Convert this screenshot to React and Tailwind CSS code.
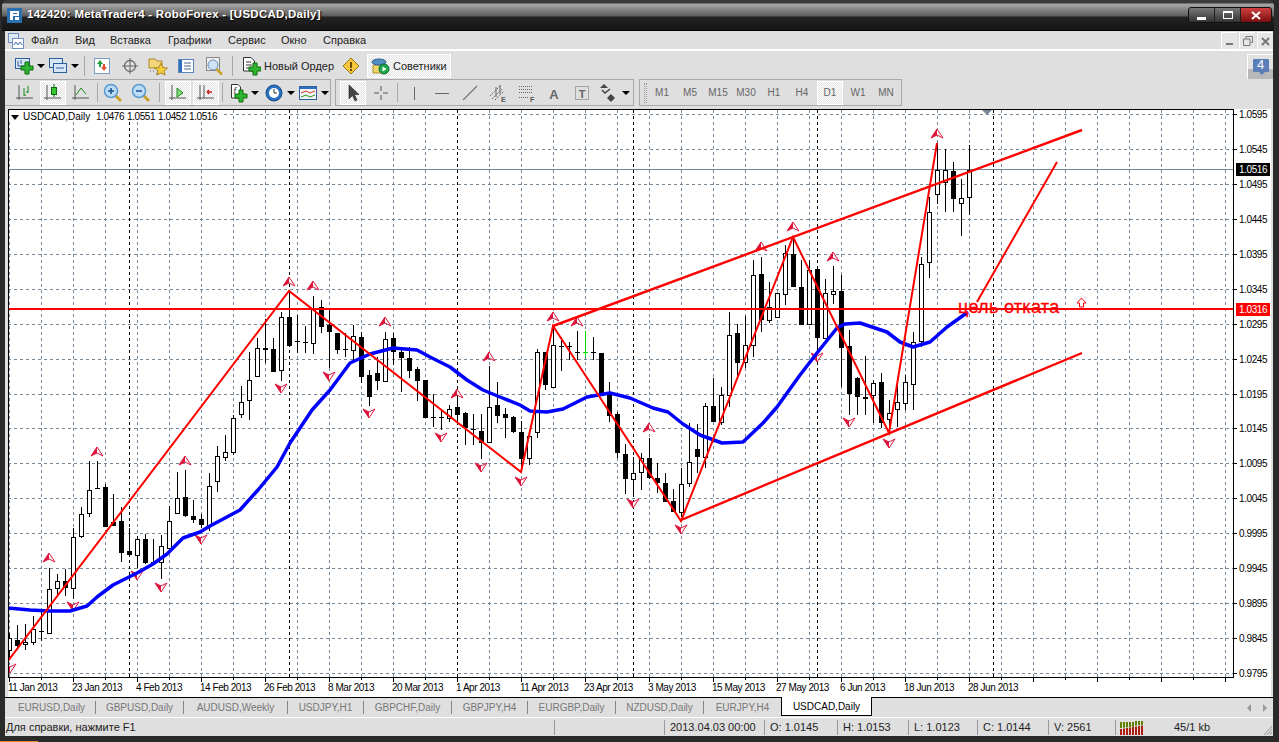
import React from "react";

// [high, bodyTop, bodyBottom, low, type] in page pixels; candle i sits at x = 9 + 8 * i
const CANDLES = [
  [633, 638, 650, 660, "w"], [625, 640, 646, 650, "b"], [624, 642, 644, 650, "w"], [616, 629, 642, 645, "w"],
  [612, 631, 632, 641, "b"], [568, 589, 633, 634, "w"], [574, 581, 588, 597, "w"], [569, 581, 588, 596, "b"],
  [528, 537, 588, 599, "w"], [507, 514, 536, 538, "w"], [461, 490, 513, 517, "w"], [461, 488, 489, 489, "b"],
  [484, 487, 527, 527, "b"], [494, 522, 526, 526, "b"], [507, 521, 553, 562, "b"], [528, 551, 555, 555, "b"],
  [536, 539, 555, 568, "w"], [534, 539, 563, 564, "b"], [539, 562, 563, 563, "b"], [535, 546, 562, 579, "w"],
  [506, 521, 548, 548, "w"], [472, 498, 513, 514, "w"], [470, 497, 516, 517, "b"], [500, 516, 520, 523, "b"],
  [514, 519, 525, 528, "b"], [473, 486, 525, 531, "w"], [446, 456, 481, 492, "w"], [435, 452, 457, 461, "w"],
  [415, 418, 452, 455, "w"], [386, 402, 414, 418, "w"], [352, 380, 400, 420, "w"], [338, 348, 376, 377, "w"],
  [319, 348, 350, 363, "b"], [338, 349, 372, 372, "b"], [312, 317, 370, 381, "w"], [290, 317, 346, 347, "b"],
  [315, 341, 342, 353, "b"], [326, 342, 343, 353, "b"], [296, 309, 343, 354, "w"], [300, 307, 327, 333, "b"],
  [310, 325, 332, 368, "b"], [333, 333, 350, 354, "b"], [333, 349, 350, 357, "b"], [325, 336, 350, 360, "w"],
  [332, 337, 377, 383, "b"], [370, 375, 397, 406, "b"], [357, 373, 381, 390, "b"], [332, 339, 381, 381, "w"],
  [333, 338, 352, 365, "b"], [348, 352, 358, 392, "b"], [347, 358, 371, 378, "b"], [367, 369, 381, 401, "b"],
  [380, 380, 418, 418, "b"], [394, 417, 418, 427, "b"], [410, 417, 418, 430, "b"], [405, 409, 418, 422, "w"],
  [390, 407, 415, 423, "b"], [412, 413, 428, 445, "b"], [414, 429, 430, 445, "b"], [414, 431, 443, 459, "b"],
  [366, 407, 442, 442, "w"], [382, 405, 416, 423, "b"], [408, 414, 418, 438, "b"], [416, 417, 432, 433, "b"],
  [421, 432, 459, 470, "b"], [430, 436, 458, 465, "w"], [349, 352, 432, 438, "w"], [352, 352, 385, 390, "b"],
  [325, 345, 387, 387, "w"], [337, 346, 347, 371, "b"], [342, 346, 347, 360, "b"], [331, 352, 353, 360, "b"],
  [331, 352, 353, 357, "g"], [337, 352, 353, 360, "b"], [353, 353, 393, 393, "b"], [382, 395, 416, 422, "b"],
  [412, 414, 453, 458, "b"], [444, 454, 479, 494, "b"], [457, 473, 479, 496, "w"], [453, 458, 472, 490, "w"],
  [438, 458, 478, 479, "b"], [463, 478, 483, 493, "b"], [473, 483, 502, 502, "b"], [489, 501, 512, 512, "b"],
  [468, 484, 512, 517, "w"], [423, 462, 483, 487, "w"], [424, 449, 457, 473, "b"], [403, 406, 457, 468, "w"],
  [378, 406, 422, 422, "b"], [387, 395, 422, 425, "w"], [312, 335, 395, 407, "w"], [324, 333, 363, 378, "b"],
  [316, 345, 362, 368, "w"], [260, 275, 345, 357, "w"], [257, 274, 320, 332, "b"], [282, 307, 320, 323, "w"],
  [293, 293, 317, 317, "w"], [245, 253, 294, 305, "w"], [237, 254, 287, 287, "b"], [260, 287, 325, 325, "b"],
  [260, 270, 324, 324, "w"], [269, 269, 338, 353, "b"], [279, 293, 338, 338, "w"], [266, 291, 294, 304, "w"],
  [275, 291, 348, 387, "b"], [330, 346, 394, 415, "b"], [377, 378, 397, 415, "b"], [356, 397, 399, 415, "b"],
  [380, 383, 395, 423, "w"], [373, 382, 423, 428, "b"], [400, 413, 419, 433, "w"], [382, 402, 409, 427, "w"],
  [375, 382, 403, 410, "w"], [332, 342, 384, 410, "w"], [257, 264, 341, 347, "w"], [197, 212, 262, 278, "w"],
  [143, 170, 194, 204, "w"], [149, 170, 182, 212, "w"], [162, 171, 199, 212, "b"], [179, 198, 203, 236, "w"],
  [145, 170, 197, 215, "w"],
];

const MA = "8,608 30,610 49,611 70,611 87,606 97,597 113,585 137,573 153,564 167,554 183,538 200,532 210,526 240,510 258,490 277,467 290,443 312,410 330,390 350,363 370,354 393,348 417,350 430,357 450,367 467,380 483,390 500,397 520,405 530,411 547,412 563,409 587,397 610,393 630,398 653,408 668,412 683,424 700,435 722,443 743,442 763,423 777,407 800,375 817,353 837,328 845,324 860,323 887,332 900,342 913,347 930,342 947,327 968,312";
const ZIGZAG = "8,661 289,291 521,472 553,326 681,521 793,237 889,433 937,143";

const UP_MARKS = [[49, 558], [97, 452], [185, 461], [289, 282], [313, 286], [385, 322], [457, 394], [489, 357], [553, 317], [577, 322], [649, 428], [761, 247], [793, 227], [833, 257], [937, 134]];
const DOWN_MARKS = [[10, 668], [73, 606], [137, 575], [161, 587], [201, 539], [281, 388], [329, 376], [369, 413], [441, 437], [481, 467], [521, 481], [633, 503], [681, 529], [817, 357], [849, 422], [889, 443]];

const PRICES = ["1.0595", "1.0545", "1.0495", "1.0445", "1.0395", "1.0345", "1.0295", "1.0245", "1.0195", "1.0145", "1.0095", "1.0045", "0.9995", "0.9945", "0.9895", "0.9845", "0.9795"];
const DATES = ["11 Jan 2013", "23 Jan 2013", "4 Feb 2013", "14 Feb 2013", "26 Feb 2013", "8 Mar 2013", "20 Mar 2013", "1 Apr 2013", "11 Apr 2013", "23 Apr 2013", "3 May 2013", "15 May 2013", "27 May 2013", "6 Jun 2013", "18 Jun 2013", "28 Jun 2013"];
const SEPARATORS = [129, 289, 457, 633, 817, 993];

const gridY = (k) => Math.round(114 + 34.94 * k);

const Marker = ({ x, y, down }) => (
  <g transform={`translate(${x} ${y}) scale(1 ${down ? -1 : 1})`}>
    <path d="M0 -5L6 4L0 1L-6 4Z" fill="#fff" stroke="#dc143c" strokeWidth="1" />
    <path d="M0 -5L0 1L-6 4Z" fill="#dc143c" />
  </g>
);

const Chart = () => (
  <svg width="1263" height="588" viewBox="8 109 1263 588" className="block shrink-0 bg-white" style={{ fontFamily: "'Liberation Sans', sans-serif" }}>
    <g shapeRendering="crispEdges">
      {PRICES.map((_, k) => (
        <line key={k} x1="8" x2="1233" y1={gridY(k) + 0.5} y2={gridY(k) + 0.5} stroke="#778899" strokeDasharray="3 3" />
      ))}
      {Array.from({ length: 39 }, (_, k) => (
        <line key={k} x1={9.5 + 32 * k} x2={9.5 + 32 * k} y1="110" y2="677" stroke="#778899" strokeDasharray="3 3" />
      ))}
      {SEPARATORS.map((x) => (
        <line key={x} x1={x + 0.5} x2={x + 0.5} y1="110" y2="677" stroke="#000" strokeDasharray="3 3" />
      ))}
      <line x1="8" x2="1233" y1="169.5" y2="169.5" stroke="#778899" />
      {CANDLES.map(([hi, top, bot, lo, type], i) => {
        const x = 9 + 8 * i;
        const color = type === "g" ? "#00e000" : "#000";
        return (
          <g key={i}>
            <rect x={x} y={hi} width="1" height={lo - hi} fill={color} />
            {type === "w" ? (
              <rect x={x - 1.5} y={top + 0.5} width="4" height={bot - top} fill="#fff" stroke="#000" />
            ) : (
              <rect x={x - 2} y={top} width="5" height={Math.max(bot - top, 1)} fill={color} />
            )}
          </g>
        );
      })}
    </g>
    {UP_MARKS.map(([x, y]) => <Marker key={x} x={x} y={y} />)}
    {DOWN_MARKS.map(([x, y]) => <Marker key={x} x={x} y={y} down />)}
    <polyline points={MA} fill="none" stroke="#0000ff" strokeWidth="3.5" strokeLinejoin="round" />
    <polyline points={ZIGZAG} fill="none" stroke="#ff0000" strokeWidth="2" />
    <line x1="553" y1="326" x2="1082" y2="130" stroke="#ff0000" strokeWidth="2.4" />
    <line x1="681" y1="520" x2="1082" y2="353" stroke="#ff0000" strokeWidth="2.4" />
    <line x1="977" y1="302" x2="1057" y2="162" stroke="#ff0000" strokeWidth="2" />
    <rect x="8" y="308" width="1225" height="2" fill="#ff0000" />
    <text x="958" y="313" fontSize="18" letterSpacing="0.3" fill="#ff0000" stroke="#ff0000" strokeWidth="0.3">цель отката</text>
    <path d="M1081.5 298L1086 303H1083.500V307H1079.500V303H1077Z" fill="#fff" stroke="#ff0000" />
    <path d="M982 110H992L987 115Z" fill="#778899" />
    <rect x="9" y="110" width="212" height="12" fill="#fff" />
    <path d="M11 115H19L15 120Z" fill="#000" />
    <text x="23" y="120" fontSize="10" fill="#000">USDCAD,Daily</text>
    {[["1.0476", 96], ["1.0551", 127], ["1.0452", 158], ["1.0516", 189]].map(([v, x]) => (
      <text key={x} x={x} y="120" fontSize="10" letterSpacing="-0.4" fill="#000">{v}</text>
    ))}
    <g shapeRendering="crispEdges">
      <rect x="8" y="109" width="1225" height="568" fill="none" stroke="#000" transform="translate(.5 .5)" />
      {PRICES.map((_, k) => (
        <rect key={k} x="1233" y={gridY(k)} width="4" height="1" fill="#000" />
      ))}
      {Array.from({ length: 39 }, (_, k) => (
        <rect key={k} x={9 + 32 * k} y="678" width="1" height={k % 2 === 0 ? 4 : 2} fill="#000" />
      ))}
      <rect x="1236" y="163" width="34" height="13" fill="#000" />
      <rect x="1236" y="303" width="34" height="13" fill="#ff0000" />
    </g>
    {PRICES.map((p, k) => (
      <text key={p} x="1239" y={gridY(k) + 4} fontSize="10" letterSpacing="-0.4" fill="#000">{p}</text>
    ))}
    <text x="1239" y="173" fontSize="10" letterSpacing="-0.4" fill="#fff">1.0516</text>
    <text x="1239" y="313" fontSize="10" letterSpacing="-0.4" fill="#fff">1.0316</text>
    {DATES.map((d, k) => (
      <text key={d} x={8 + 64 * k} y="691" fontSize="10" letterSpacing="-0.45" fill="#000">{d}</text>
    ))}
  </svg>
);

// toolbar icons, all on a 20x20 box
const Svg = ({ children, w = 20 }) => (
  <svg width={w} height="20" viewBox={`0 0 ${w} 20`} className="block shrink-0">{children}</svg>
);
const Plus = ({ x, y }) => (
  <path d={`M${x - 2} ${y - 6}h4v4h4v4h-4v4h-4v-4h-4v-4h4z`} fill="#2fb52f" stroke="#0d6b0d" />
);
const Caret = () => <div className="ml-[3px] w-0 h-0 border-x-[4px] border-x-transparent border-t-[4px] border-t-black" />;
const Axes = () => <path d="M4 2V17M1 15H18" stroke="#555" fill="none" />;
const Lens = ({ minus }) => (
  <Svg>
    <path d="M12 12L18 18" stroke="#c9a227" strokeWidth="3" />
    <circle cx="8" cy="8" r="6.5" fill="#bcdcf5" stroke="#5a9ad0" strokeWidth="1.5" />
    <path d={minus ? "M5 8H11" : "M5 8H11M8 5V11"} stroke="#1c4f8c" strokeWidth="1.5" />
  </Svg>
);

const icons = {
  newChart: (
    <Svg><rect x="1.5" y="2.5" width="14" height="10" fill="#d8e6f7" stroke="#2b5f9e" /><path d="M4 5V10H13M7 4V8" stroke="#2b5f9e" fill="none" /><Plus x={13} y={12} /></Svg>
  ),
  profiles: (
    <Svg><rect x="1.5" y="2.5" width="13" height="9" fill="#d8e6f7" stroke="#2b5f9e" /><rect x="5.5" y="7.5" width="13" height="9" fill="#d8e6f7" stroke="#2b5f9e" /><path d="M8 12H16" stroke="#2b5f9e" /></Svg>
  ),
  market: (
    <Svg><rect x="2.5" y="2.5" width="15" height="15" fill="#fff" stroke="#7aa0c8" /><path d="M8 4L11 8H9V11H7V8H5Z" fill="#1f9e3a" /><path d="M12 15L9 11H11V8H13V11H15Z" fill="#e0492c" /></Svg>
  ),
  cross: (
    <Svg><circle cx="10" cy="10" r="5.5" fill="none" stroke="#666" strokeWidth="1.3" /><path d="M10 2V18M2 10H18" stroke="#666" /></Svg>
  ),
  folder: (
    <Svg><path d="M1 3H7L9 5H14V12H1Z" fill="#f4d67a" stroke="#a8862a" /><path d="M2 15H3M5 15H6M8 18H9" stroke="#555" /><path d="M13 7L15 11.5L19.5 12L16 15L17 19L13 17L9 19L10 15L6.5 12L11 11.5Z" fill="#f5cb3a" stroke="#a8862a" /></Svg>
  ),
  terminal: (
    <Svg><rect x="2.5" y="3.5" width="15" height="13" fill="#fff" stroke="#5c86b8" /><rect x="3" y="4" width="3" height="12" fill="#2f6fc0" /><path d="M8 7H15M8 10H15M8 13H15" stroke="#4a6a90" /></Svg>
  ),
  tester: (
    <Svg><rect x="2.5" y="1.5" width="13" height="13" fill="#eee" stroke="#888" /><circle cx="9" cy="9" r="5" fill="#cfe3f5" stroke="#6a8fb5" /><path d="M12.5 13L18 18.5" stroke="#c9a227" strokeWidth="2.5" /></Svg>
  ),
  order: (
    <Svg><path d="M2.5 1.5H10L13.5 5V15H2.5Z" fill="#fff" stroke="#333" /><path d="M5 6H10M5 9H11M5 12H8" stroke="#333" /><Plus x={14} y={13} /></Svg>
  ),
  warn: (
    <Svg><path d="M10 2L18 10L10 18L2 10Z" fill="#f5c73d" stroke="#9a7a14" strokeLinejoin="round" /><rect x="9" y="6" width="2" height="6" fill="#6b4a00" /><rect x="9" y="13" width="2" height="2" fill="#6b4a00" /></Svg>
  ),
  experts: (
    <Svg><path d="M2 9H16V17H2Z" fill="#efd56a" stroke="#a8902a" /><ellipse cx="8" cy="6" rx="7" ry="3" fill="#4f8fc4" stroke="#2c5f8c" /><circle cx="13" cy="13" r="5" fill="#1ea84a" stroke="#0d6b2c" /><path d="M11.5 10.5L15.5 13L11.5 15.5Z" fill="#fff" /></Svg>
  ),
  bars: (
    <Svg><Axes /><path d="M9 5V13M9 12H11M13 3V10M11 9H13" stroke="#1f8a1f" fill="none" /></Svg>
  ),
  candles: (
    <Svg><Axes /><path d="M11 1V14" stroke="#0a6a0a" /><rect x="8.5" y="4.5" width="5" height="7" fill="#35c435" stroke="#0a6a0a" /></Svg>
  ),
  line: (
    <Svg><Axes /><path d="M5 12L10 5L15 11" stroke="#1f8a1f" fill="none" /></Svg>
  ),
  shift: (
    <Svg><Axes /><path d="M9 5L15 10L9 14Z" fill="#7fdc7f" stroke="#1f8a1f" /></Svg>
  ),
  scroll: (
    <Svg><path d="M4 2V17M1 15H18M8 2V15" stroke="#555" fill="none" /><path d="M16 9H11M11 9L13 7M11 9L13 11" stroke="#d02020" strokeWidth="1.5" fill="none" /></Svg>
  ),
  template: (
    <Svg><path d="M3.5 1.5H10L12.5 4V15H3.500Z" fill="#fff" stroke="#333" /><text x="5.5" y="11" fontSize="9" fontStyle="italic" fill="#333">f</text><Plus x={13} y={13} /></Svg>
  ),
  clock: (
    <Svg><circle cx="10" cy="10" r="8" fill="#2a6fc0" stroke="#174a85" /><circle cx="10" cy="10" r="5" fill="#fff" /><path d="M10 6V10H13" stroke="#333" fill="none" /></Svg>
  ),
  indicator: (
    <Svg><rect x="1.5" y="3.5" width="17" height="13" fill="#f4f4f4" stroke="#2b5f9e" /><rect x="2" y="4" width="16" height="2" fill="#2f6fc0" /><path d="M3 10L8 8L12 10L17 8" stroke="#c33" fill="none" /><path d="M3 14L8 12L12 14L17 12" stroke="#2a9a2a" fill="none" /></Svg>
  ),
  cursor: (
    <Svg><path d="M6 2L6 16L9.5 12.5L12 18L14 17L11.5 11.5H16Z" fill="#444" stroke="#222" strokeWidth="0.6" /></Svg>
  ),
  crossLine: <Svg><path d="M10 3V8M10 12V17M3 10H8M12 10H17" stroke="#555" /></Svg>,
  vline: <Svg><path d="M10.5 4V17" stroke="#666" /></Svg>,
  hline: <Svg><path d="M3 10.5H17" stroke="#666" /></Svg>,
  diag: <Svg><path d="M3 17L17 3" stroke="#777" strokeWidth="1.2" /></Svg>,
  fibChannel: (
    <Svg><path d="M2 13L12 3M4 16L14 6M7 17L16 8" stroke="#666" strokeDasharray="1.5 1" /><path d="M8 4V14M12 2V11" stroke="#666" /><text x="13" y="19" fontSize="7" fontWeight="bold" fill="#555">E</text></Svg>
  ),
  fib: (
    <Svg><path d="M3 3.5H17M3 6.5H17M3 9.5H17M3 14.5H13" stroke="#666" strokeDasharray="1 1" /><text x="14" y="19" fontSize="7" fontWeight="bold" fill="#555">F</text></Svg>
  ),
  letterA: <Svg><text x="10" y="16" fontSize="13" fontWeight="bold" fill="#666" textAnchor="middle">A</text></Svg>,
  letterT: (
    <Svg><rect x="3.5" y="3.5" width="13" height="13" fill="none" stroke="#666" strokeDasharray="1 1" /><text x="10" y="15" fontSize="11" fontWeight="bold" fill="#666" textAnchor="middle">T</text></Svg>
  ),
  arrows: (
    <Svg><path d="M5 1L9 5H1Z" fill="#444" /><path d="M3 7L6 10L11 6" stroke="#444" fill="none" strokeWidth="1.5" /><path d="M12 11L16 15L12 19L8 15Z" fill="#444" /></Svg>
  ),
};

const Cell = ({ className = "w-7", children }) => (
  <div className={`flex shrink-0 items-center justify-center h-full ${className}`}>{children}</div>
);
const Sep = ({ className = "w-1" }) => (
  <div className={`flex shrink-0 justify-center h-full py-[3px] ${className}`}>
    <div className="w-px h-full bg-[#a8a8a8]" />
  </div>
);
const Dither = "bg-[image:repeating-conic-gradient(#ffffff_0_25%,#e2e2e2_0_50%)] bg-[length:2px_2px] border border-white";

const WinButton = ({ className, children }) => (
  <div className={`flex items-center justify-center h-full ${className}`}>{children}</div>
);

const TitleBar = () => (
  <div className="flex items-center shrink-0 h-[31px] ml-[2px] mr-[5px] pl-[5px] pr-[3px] rounded-t-[6px] border-b border-black bg-[linear-gradient(to_bottom,#3a3a3a_0px,#3a3a3a_3px,#a8a8a8_4px,#5c5c5c_16px,#232323_17px,#161616_100%)]">
    <svg width="15" height="15" viewBox="0 0 15 15" className="block shrink-0">
      <rect width="15" height="15" fill="#2a6fb0" />
      <path d="M3 3H12V8H6V12H3ZM6 5V6H10V5ZM8 9H12V12H8Z" fill="#fff" fillRule="evenodd" />
    </svg>
    <span className="ml-[5px] text-[11.5px] font-bold text-white tracking-[0.25px] [text-shadow:1px_1px_1px_#000]">
      142420: MetaTrader4 - RoboForex - [USDCAD,Daily]
    </span>
    <div className="ml-auto flex h-[14px] rounded-[2px] outline outline-[#111]">
      <WinButton className="w-[26px] bg-[linear-gradient(to_bottom,#777,#333)] border-r border-[#222]">
        <div className="w-[9px] h-[3px] mt-[6px] bg-white" />
      </WinButton>
      <WinButton className="w-[26px] bg-[linear-gradient(to_bottom,#777,#333)] border-r border-[#222]">
        <div className="w-[10px] h-[8px] border border-t-2 border-white" />
      </WinButton>
      <WinButton className="w-[30px] bg-[linear-gradient(to_bottom,#d04040,#7a0e0e)]">
        <svg width="10" height="9" viewBox="0 0 10 9"><path d="M1 1L9 8M9 1L1 8" stroke="#fff" strokeWidth="2" /></svg>
      </WinButton>
    </div>
  </div>
);

const MENU = [["Файл", "w-11"], ["Вид", "w-[35px]"], ["Вставка", "w-[58px]"], ["Графики", "w-[60px]"], ["Сервис", "w-[53px]"], ["Окно", "w-[42px]"], ["Справка", "w-16"]];

const MdiButton = ({ children }) => (
  <div className="flex items-center justify-center w-4 h-[17px] ml-[2px] border-t border-l border-white bg-[#e6e6e6]">{children}</div>
);

const MenuBar = () => (
  <div className="flex items-center h-[19px] shrink-0 pl-[3px] text-[11px] text-[#222]">
    <svg width="16" height="16" viewBox="0 0 16 16" className="block shrink-0">
      <rect x="0.5" y="0.5" width="10" height="9" fill="#dfe9f6" stroke="#6f8fc0" />
      <rect x="4.5" y="5.5" width="11" height="10" fill="#fff" stroke="#6f8fc0" />
      <path d="M6 12L8 9L10 12L12 9L14 12" stroke="#3f6fb0" fill="none" />
    </svg>
    <div className="w-[7px]" />
    {MENU.map(([label, w]) => (
      <div key={label} className={w}>{label}</div>
    ))}
    <div className="ml-auto flex items-center">
      <MdiButton><div className="w-[7px] h-[2px] mt-[6px] bg-[#777]" /></MdiButton>
      <MdiButton>
        <svg width="10" height="10" viewBox="0 0 10 10"><path d="M3 2.5V.5H9.500V6.500H7.500M.5 3H7V9.500H.5Z" fill="none" stroke="#777" /></svg>
      </MdiButton>
      <MdiButton>
        <svg width="9" height="9" viewBox="0 0 9 9"><path d="M1 1L8 8M8 1L1 8" stroke="#777" strokeWidth="2" /></svg>
      </MdiButton>
    </div>
  </div>
);

const ToolbarTop = () => (
  <div className="flex items-center h-[26px] shrink-0 mt-[2px] pl-[7px] text-[11px] text-[#222]">
    <Cell className="w-[34px]">{icons.newChart}<Caret /></Cell>
    <Cell className="w-[34px]">{icons.profiles}<Caret /></Cell>
    <Sep className="w-2" />
    <Cell>{icons.market}</Cell>
    <Cell>{icons.cross}</Cell>
    <Cell>{icons.folder}</Cell>
    <Cell>{icons.terminal}</Cell>
    <Cell>{icons.tester}</Cell>
    <Sep className="w-2" />
    <Cell className="w-[104px] justify-start pl-[5px] gap-[3px]">{icons.order}<span>Новый Ордер</span></Cell>
    <Cell className="w-[22px]">{icons.warn}</Cell>
    <div className={`flex items-center shrink-0 ml-[5px] h-[24px] w-[84px] pl-[3px] gap-[2px] ${Dither}`}>
      {icons.experts}<span>Советники</span>
    </div>
    <div className="ml-auto mr-0 flex h-[25px] w-[26px] border-t border-l border-white bg-[linear-gradient(to_bottom,#e2e2e2_60%,#b8b8b8_60%)] items-center justify-center">
      <div className="relative flex items-center justify-center w-4 h-[13px] mb-[3px] bg-[#5b7db8] rounded-[1px] text-[13px] text-white">
        4
        <div className="absolute -bottom-[3px] left-[6px] w-0 h-0 border-x-[3px] border-x-transparent border-t-[3px] border-t-[#5b7db8]" />
      </div>
    </div>
  </div>
);

const Group = ({ className, children }) => (
  <div className={`flex items-center h-full border-t border-b border-r border-[#a8a8a8] ${className}`}>{children}</div>
);

const TIMEFRAMES = ["M1", "M5", "M15", "M30", "H1", "H4", "D1", "W1", "MN"];

const ToolbarBottom = () => (
  <div className="flex h-[27px] shrink-0">
    <Group className="w-[326px] pl-[6px]">
      <Cell>{icons.bars}</Cell>
      <div className={`flex items-center justify-center w-[26px] h-[24px] mx-px ${Dither}`}>{icons.candles}</div>
      <Cell>{icons.line}</Cell>
      <Sep />
      <Cell>{<Lens />}</Cell>
      <Cell>{<Lens minus />}</Cell>
      <Sep className="w-2" />
      <div className={`flex items-center justify-center w-[26px] h-[24px] ml-[2px] mr-px ${Dither}`}>{icons.shift}</div>
      <div className={`flex items-center justify-center w-[26px] h-[24px] mx-px ${Dither}`}>{icons.scroll}</div>
      <Sep />
      <Cell className="w-[38px]">{icons.template}<Caret /></Cell>
      <Cell className="w-[34px]">{icons.clock}<Caret /></Cell>
      <Cell className="w-[34px]">{icons.indicator}<Caret /></Cell>
    </Group>
    <Group className="w-[299px] ml-[4px] border-l pl-[4px]">
      <div className={`flex items-center justify-center w-[26px] h-[24px] mr-px ${Dither}`}>{icons.cursor}</div>
      <Cell>{icons.crossLine}</Cell>
      <Sep className="w-[5px]" />
      <Cell>{icons.vline}</Cell>
      <Cell>{icons.hline}</Cell>
      <Cell>{icons.diag}</Cell>
      <Cell>{icons.fibChannel}</Cell>
      <Cell>{icons.fib}</Cell>
      <Cell>{icons.letterA}</Cell>
      <Cell>{icons.letterT}</Cell>
      <Cell className="w-[37px]">{icons.arrows}<Caret /></Cell>
    </Group>
    <Group className="w-[263px] ml-[5px] border-l text-[10px] text-[#666]">
      <div className="w-[3px] h-[20px] ml-[4px] mr-px border-x border-dotted border-[#999]" />
      {TIMEFRAMES.map((t) =>
        t === "D1" ? (
          <div key={t} className={`flex items-center justify-center w-[26px] h-[24px] mx-px ${Dither}`}>{t}</div>
        ) : (
          <Cell key={t}>{t}</Cell>
        )
      )}
    </Group>
  </div>
);

const TABS = [["EURUSD,Daily", "w-[88px]"], ["GBPUSD,Daily", "w-[88px]"], ["AUDUSD,Weekly", "w-[104px]"], ["USDJPY,H1", "w-[76px]"], ["GBPCHF,Daily", "w-[88px]"], ["GBPJPY,H4", "w-[76px]"], ["EURGBP,Daily", "w-[88px]"], ["NZDUSD,Daily", "w-[88px]"]];

const Tabs = () => (
  <div className="flex items-center h-[20px] shrink-0 pl-[3px] border-t border-black text-[10px] text-[#777]">
    {TABS.map(([label, w]) => (
      <div key={label} className={`flex items-center justify-center h-[13px] border-r border-[#888] ${w}`}>{label}</div>
    ))}
    <div className="flex items-center justify-center w-[77px]">EURJPY,H4</div>
    <div className="flex items-center justify-center self-start w-[91px] h-[19px] -mt-px bg-white border-x border-b border-black text-black">USDCAD,Daily</div>
    <div className="ml-auto flex items-center gap-[12px] pr-[6px]">
      <div className="w-0 h-0 border-y-[4px] border-y-transparent border-r-[4px] border-r-[#999]" />
      <div className="w-0 h-0 border-y-[4px] border-y-transparent border-l-[4px] border-l-[#999]" />
    </div>
  </div>
);

const STATUS = [["2013.04.03 00:00", "w-[100px]"], ["O: 1.0145", "w-[73px]"], ["H: 1.0153", "w-[71px]"], ["L: 1.0123", "w-[69px]"], ["C: 1.0144", "w-[71px]"], ["V: 2561", "w-[67px]"]];

const StatusBar = () => (
  <div className="flex items-center h-[19px] shrink-0 border-t border-white text-[11px] text-[#222]">
    <div className="w-[549px] pl-px">Для справки, нажмите F1</div>
    <div className="w-[110px] h-[15px] border-l border-[#999]" />
    {STATUS.map(([label, w]) => (
      <div key={label} className={`h-[15px] pl-[5px] leading-[15px] border-l border-[#999] ${w}`}>{label}</div>
    ))}
    <div className="flex items-center h-[15px] pl-[4px] border-l border-[#999]">
      <svg width="24" height="15" viewBox="0 0 24 15" className="block shrink-0">
        {Array.from({ length: 8 }, (_, i) => (
          <g key={i}>
            <rect x={i * 3} y={i > 4 ? 1 : 2} width="2" height={6 - i * 0.3} fill="#5f8000" />
            <rect x={i * 3} y={9 - i * 0.5} width="2" height={6 + i * 0.5} fill="#b02010" />
          </g>
        ))}
      </svg>
    </div>
    <div className="ml-[30px]">45/1 kb</div>
    <svg width="10" height="12" viewBox="0 0 10 12" className="ml-auto block shrink-0 self-end">
      <path d="M9 2L1 11M9 5L4 11M9 8L7 11" stroke="#999" fill="none" />
    </svg>
  </div>
);

export default function App() {
  return (
    <div className="flex flex-col w-[1279px] h-[742px] overflow-hidden bg-[#2a2a2a]" style={{ fontFamily: "'Liberation Sans', Arial, sans-serif" }}>
      <TitleBar />
      <div className="flex flex-col flex-1 min-h-0 ml-[5px] mr-[6px] bg-[#dfdfdf]">
        <MenuBar />
        <div className="h-[2px] -mt-px bg-white shrink-0" />
        <ToolbarTop />
        <ToolbarBottom />
        <div className="h-[3px] shrink-0" />
        <div className="ml-[3px]"><Chart /></div>
        <Tabs />
        <StatusBar />
      </div>
      <div className="flex items-end h-[6px] shrink-0">
        <div className="w-[38px] h-px bg-[#e8862a]" />
      </div>
    </div>
  );
}
